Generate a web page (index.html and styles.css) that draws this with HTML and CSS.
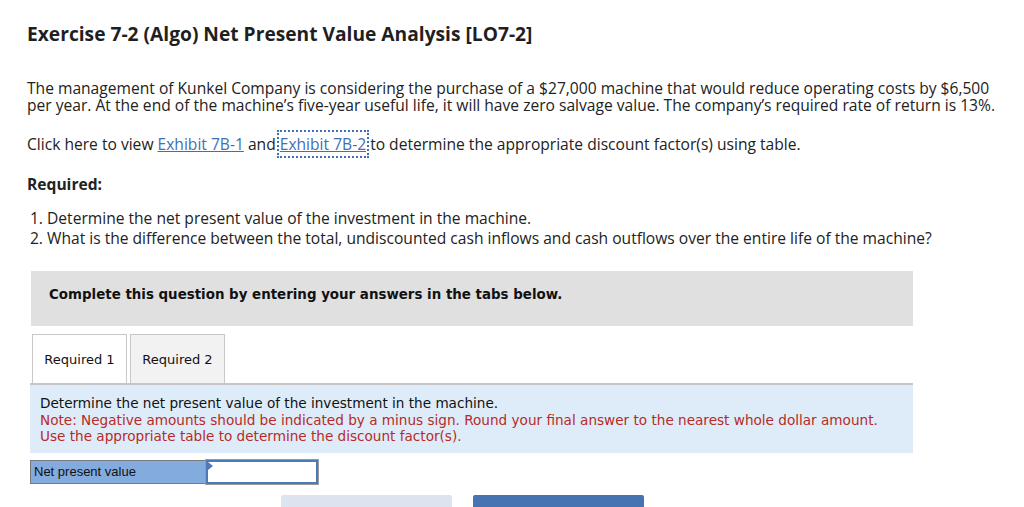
FILE: index.html
```html
<!DOCTYPE html>
<html>
<head>
<meta charset="utf-8">
<link rel="stylesheet" href="styles.css">
</head>
<body>
<div class="page">
  <h1 class="title">Exercise 7-2 (Algo) Net Present Value Analysis [LO7-2]</h1>
  <p class="intro">The management of Kunkel Company is considering the purchase of a $27,000 machine that would reduce operating costs by $6,500 per year. At the end of the machine’s five-year useful life, it will have zero salvage value. The company’s required rate of return is 13%.</p>
  <p class="click">Click here to view <a class="link">Exhibit 7B-1</a> and <a class="link focus">Exhibit 7B-2</a> to determine the appropriate discount factor(s) using table.</p>
  <p class="req">Required:</p>
  <ol class="list">
    <li>Determine the net present value of the investment in the machine.</li>
    <li>What is the difference between the total, undiscounted cash inflows and cash outflows over the entire life of the machine?</li>
  </ol>
  <div class="work">
    <div class="banner">Complete this question by entering your answers in the tabs below.</div>
    <div class="tabs">
      <div class="tab active">Required 1</div>
      <div class="tab">Required 2</div>
    </div>
    <div class="panel">
      <div class="instr">Determine the net present value of the investment in the machine.</div>
      <div class="note">Note: Negative amounts should be indicated by a minus sign. Round your final answer to the nearest whole dollar amount.<br>Use the appropriate table to determine the discount factor(s).</div>
    </div>
    <div class="answer">
      <div class="alabel">Net present value</div>
      <div class="ainput"><span class="flag"></span></div>
    </div>
    <div class="nav">
      <div class="btn prev"></div>
      <div class="btn next"></div>
    </div>
  </div>
</div>
</body>
</html>
```
FILE: styles.css
```css
html, body { margin: 0; padding: 0; background: #fff; }
.page { padding: 23px 0 0 27px; font-family: "Open Sans", "Lato", sans-serif; color: #222; }
.title { margin: 0; font-size: 19.2px; font-weight: 700; line-height: 22px; color: #1f1f1f; }
.intro { margin: 35px 0 0; font-size: 15.6px; line-height: 17px; width: 985px; }
.click { margin: 22px 0 0; font-size: 15.6px; line-height: 17px; }
.link { color: #3f6fb5; text-decoration: underline; }
.focus { outline: 2px dotted #3f6fb5; outline-offset: 1px; }
.req { margin: 23px 0 0; font-size: 15.6px; font-weight: 700; line-height: 17px; }
.list { margin: 15px 0 0; padding: 0 0 0 20px; font-size: 15.6px; line-height: 20px; }
.list li { padding-left: 0; }
.work { margin: 23px 0 0 4px; width: 882px; font-family: "DejaVu Sans", Verdana, sans-serif; }
.banner { background: #e0e0e0; height: 55px; box-sizing: border-box; padding: 16px 0 0 18px; font-size: 13.4px; font-weight: 700; color: #111; }
.tabs { display: flex; gap: 3px; margin-top: 8px; padding-left: 1px; }
.tab { width: 95px; height: 49px; box-sizing: border-box; border: 1px solid #c8c8c8; border-bottom: none; background: #f2f2f2; font-size: 13px; color: #111; display: flex; align-items: center; justify-content: center; }
.tab.active { background: #fff; }
.panel { background: #deebf8; border-top: 2px solid #c6c6c6; padding: 10px 0 8px 10px; font-size: 13.6px; line-height: 16.5px; margin-left: -1px; }
.instr { color: #111; }
.note { color: #b52b27; }
.answer { display: flex; margin-top: 7px; margin-left: -1px; height: 24px; }
.alabel { width: 176px; box-sizing: border-box; background: #83abdd; border: 1px solid #7a7a7a; border-right: none; font-family: "Liberation Sans", Arial, sans-serif; font-size: 13px; padding: 3px 0 0 3px; color: #111; }
.ainput { position: relative; width: 112px; box-sizing: border-box; border: 2px solid #4e79b8; background: #fff; outline: 1px solid #9a9a9a; }
.flag { position: absolute; left: 0; top: 0; width: 0; height: 0; border-top: 4px solid transparent; border-bottom: 4px solid transparent; border-left: 5px solid #4e79b8; }
.nav { display: flex; gap: 21px; margin: 11px 0 0 250px; }
.btn { width: 171px; height: 20px; border-radius: 2px 2px 0 0; }
.prev { background: #dbe4ef; }
.next { background: #4674b3; }
```
